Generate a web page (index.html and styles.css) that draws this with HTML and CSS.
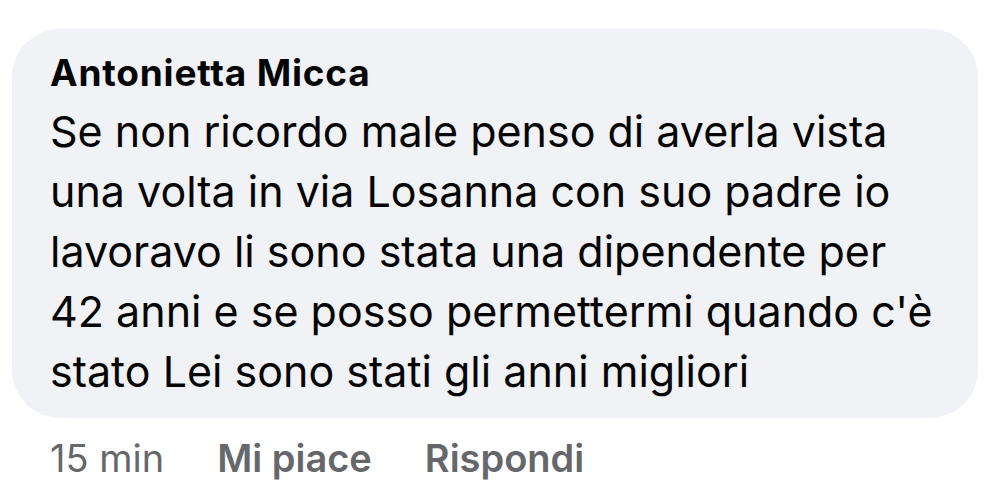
FILE: index.html
```html
<!DOCTYPE html>
<html lang="it">
<head>
<meta charset="utf-8">
<link rel="stylesheet" href="styles.css">
</head>
<body>
<div class="comment">
  <div class="bubble">
    <div class="author">Antonietta Micca</div>
    <div class="text">Se non ricordo male penso di averla vista<br>una volta in via Losanna con suo padre io<br>lavoravo li sono stata una dipendente per<br>42 anni e se posso permettermi quando c'è<br>stato Lei sono stati gli anni migliori</div>
  </div>
  <div class="actions">
    <span class="time">15 min</span>
    <span class="action">Mi piace</span>
    <span class="action">Rispondi</span>
  </div>
</div>
</body>
</html>
```

FILE: styles.css
```css
html, body {
  margin: 0;
  padding: 0;
  background: #ffffff;
}
body {
  font-family: Inter, "Noto Sans", sans-serif;
  color: #050505;
  width: 994px;
  height: 489px;
  overflow: hidden;
}
.comment {
  padding: 29px 16px 0 12px;
}
.bubble {
  background: #f0f2f5;
  border-radius: 48px;
  height: 389px;
  box-sizing: border-box;
  padding: 22px 30px 0 38px;
}
.author {
  font-size: 37px;
  font-weight: 650;
  line-height: 44px;
  letter-spacing: 0.8px;
  margin-bottom: 6px;
}
.text {
  font-size: 43px;
  line-height: 60px;
  font-weight: 400;
}
.actions {
  display: flex;
  gap: 53px;
  padding: 16px 0 0 38px;
  font-size: 38px;
  line-height: 48px;
  color: #65676b;
}
.action {
  font-weight: 600;
}
```
